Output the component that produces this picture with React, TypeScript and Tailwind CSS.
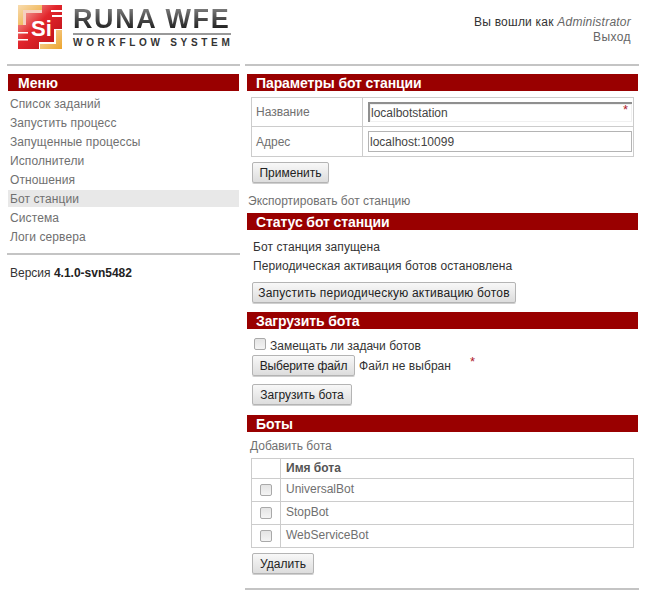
const menu = [
  "Список заданий",
  "Запустить процесс",
  "Запущенные процессы",
  "Исполнители",
  "Отношения",
  "Бот станции",
  "Система",
  "Логи сервера",
]

const bots = ["UniversalBot", "StopBot", "WebServiceBot"]

function SectionTitle({ title, className = "" }: { title: string; className?: string }) {
  return (
    <div className={`h-[17px] bg-[#990000] text-[14px] leading-[18px] font-bold text-white ${className}`}>
      {title}
    </div>
  )
}

function Btn({ label, className = "" }: { label: string; className?: string }) {
  return (
    <button className={`block h-[21px] rounded-[2px] border border-[#b4b4b4] bg-gradient-to-b from-[#f8f8f8] to-[#dddddd] text-[12px] leading-[18px] text-[#222222] shadow-[0_1px_0_#cfcfcf] ${className}`}>
      {label}
    </button>
  )
}

function Check() {
  return (
    <span className="block h-[12px] w-[12px] rounded-[2px] border border-[#a9a9a9] bg-gradient-to-b from-[#e4e4e4] to-[#f4f4f4]" />
  )
}

function Star({ className = "" }: { className?: string }) {
  return <span className={`absolute text-[13px] leading-none text-[#b0202a] ${className}`}>*</span>
}

function Logo() {
  return (
    <svg width="44" height="45" viewBox="0 0 44 45" className="shrink-0">
      <defs>
        <linearGradient id="red" x1="0" y1="0" x2="1" y2="1">
          <stop offset="0" stopColor="#f9c4b8" />
          <stop offset="0.45" stopColor="#e2262c" />
          <stop offset="1" stopColor="#b50c14" />
        </linearGradient>
        <linearGradient id="orange" x1="0" y1="0" x2="1" y2="1">
          <stop offset="0" stopColor="#f8dcb0" />
          <stop offset="1" stopColor="#eca42c" />
        </linearGradient>
      </defs>
      <rect width="44" height="44" fill="url(#red)" />
      <path d="M0 0h24v5H5v15H0z" fill="url(#orange)" />
      <path d="M5 5h19v3H8v12H5z" fill="#f6cfc0" />
      <rect x="33" y="5" width="11" height="2" fill="#fff" />
      <rect x="34" y="10" width="10" height="2" fill="#fff" />
      <rect x="0" y="27" width="10" height="1.5" fill="#fff" />
      <rect x="0" y="34" width="10" height="1.5" fill="#fff" />
      <path d="M36 24h8v20H21v-7h15z" fill="#fff" />
      <path d="M38 25h6v19H22v-5h16z" fill="url(#orange)" />
      <text x="13" y="31" fontFamily="'Liberation Sans', sans-serif" fontWeight="700" fontSize="22" fill="#fff">Si</text>
    </svg>
  )
}

export default function App() {
  return (
    <div className="h-[600px] w-[646px] overflow-hidden bg-white font-['Liberation_Sans',Arial,sans-serif] text-[12px] text-[#555555]">
      {/* Header */}
      <div className="flex h-[64px] items-start justify-between pt-[5px] pr-[15px] pl-[18px]">
        <div className="flex items-start gap-[11px]">
          <Logo />
          <div className="pt-[1px]">
            <div className="bg-gradient-to-b from-[#888888] to-[#111111] bg-clip-text text-[27px] leading-[27px] font-bold tracking-[1.6px] whitespace-nowrap text-transparent">
              RUNA WFE
            </div>
            <div className="w-[158px] border-t-2 border-[#999999] pt-[3px] text-[10px] leading-[9px] font-bold tracking-[3.7px] whitespace-nowrap text-[#333333]">
              WORKFLOW SYSTEM
            </div>
          </div>
        </div>
        <div className="pt-[10px] text-right text-[12px] leading-[15px] text-[#333333]">
          <div className="tracking-[0.23px]">
            Вы вошли как <i className="text-[#666666]">Administrator</i>
          </div>
          <div className="tracking-[0.4px] text-[#666666]">Выход</div>
        </div>
      </div>

      <div className="flex">
        {/* Left column */}
        <div className="ml-[7px] w-[233px]">
          <div className="h-[2px] bg-[#c4c4c4]" />
          <SectionTitle title="Меню" className="mx-[1px] mt-[8px] pl-[10px]" />
          <ul className="mx-[1px] mt-[3px]">
            {menu.map((item) => (
              <li key={item} className="h-[19px] py-px">
                <div className={`h-[17px] pl-[2px] leading-[19px] tracking-[0.1px] text-[#707070] ${item === "Бот станции" ? "bg-[#e8e8e8]" : ""}`}>
                  {item}
                </div>
              </li>
            ))}
          </ul>
          <div className="mt-[7px] h-[2px] bg-[#c4c4c4]" />
          <div className="mt-[9px] ml-[3px] text-[#333333]">
            Версия <b className="text-[#222222]">4.1.0-svn5482</b>
          </div>
        </div>

        {/* Right column */}
        <div className="ml-[5px] w-[394px]">
          <div className="h-[2px] bg-[#c4c4c4]" />
          <div className="ml-[2px] w-[391px]">
            <SectionTitle title="Параметры бот станции" className="mt-[8px] pl-[9px] tracking-[-0.1px]" />

            <div className="mt-[6px] ml-[4px] w-[383px] border border-[#cccccc]">
              <div className="flex h-[29px] border-b border-[#cccccc]">
                <div className="w-[111px] border-r border-[#cccccc] pl-[4px] leading-[29px] text-[#707070]">Название</div>
                <div className="relative pt-[4px] pl-[5px]">
                  <div className="h-[20px] w-[264px] border-t-2 border-l-2 border-t-[#8f8f8f] border-l-[#8f8f8f] bg-white pl-[1px] leading-[18px] text-[#444444] shadow-[inset_0_0_0_1px_#f0f0f0]">
                    localbotstation
                  </div>
                  <Star className="top-[5px] right-[4px]" />
                </div>
              </div>
              <div className="flex h-[29px]">
                <div className="w-[111px] border-r border-[#cccccc] pl-[4px] leading-[31px] text-[#707070]">Адрес</div>
                <div className="pt-[4px] pl-[5px]">
                  <div className="h-[21px] w-[264px] border border-[#b4b4b4] bg-white pl-[1px] leading-[20px] text-[#444444]">
                    localhost:10099
                  </div>
                </div>
              </div>
            </div>

            <Btn label="Применить" className="mt-[5px] ml-[5px] w-[77px]" />
            <div className="mt-[11px] ml-[1px] h-[15px] leading-[15px] text-[#707070]">Экспортировать бот станцию</div>

            <SectionTitle title="Статус бот станции" className="mt-[4px] pl-[9px] tracking-[-0.1px]" />
            <div className="mt-[8px] ml-[6px] leading-[19px] tracking-[0.07px] text-[#333333]">
              <div>Бот станция запущена</div>
              <div>Периодическая активация ботов остановлена</div>
            </div>
            <Btn label="Запустить периодическую активацию ботов" className="mt-[6px] ml-[5px] w-[264px] tracking-[0.2px]" />

            <SectionTitle title="Загрузить бота" className="mt-[9px] pl-[9px] tracking-[-0.1px]" />
            <div className="mt-[9px] ml-[7px] flex h-[14px] items-start gap-[4px] text-[#333333]">
              <Check />
              <span className="leading-[16px]">Замещать ли задачи ботов</span>
            </div>
            <div className="relative mt-[3px] ml-[5px] flex items-center">
              <Btn label="Выберите файл" className="w-[103px] tracking-[-0.1px]" />
              <span className="ml-[4px] tracking-[0.05px] text-[#333333]">Файл не выбран</span>
              <Star className="top-0 left-[218px]" />
            </div>
            <Btn label="Загрузить бота" className="mt-[8px] ml-[5px] w-[100px]" />

            <SectionTitle title="Боты" className="mt-[10px] pl-[9px]" />
            <div className="mt-[7px] ml-[3px] h-[15px] leading-[15px] text-[#707070]">Добавить бота</div>

            <div className="mt-[4px] ml-[4px] w-[383px] border border-[#cccccc]">
              <div className="flex h-[19px]">
                <div className="w-[29px] border-r border-[#cccccc]" />
                <div className="pl-[5px] leading-[19px] font-bold text-[#555555]">Имя бота</div>
              </div>
              {bots.map((name) => (
                <div key={name} className="flex h-[23px] border-t border-[#cccccc]">
                  <div className="flex w-[29px] items-center justify-center border-r border-[#cccccc] pb-px">
                    <Check />
                  </div>
                  <div className="pl-[5px] leading-[21px] text-[#707070]">{name}</div>
                </div>
              ))}
            </div>

            <Btn label="Удалить" className="mt-[5px] ml-[5px] w-[62px]" />
          </div>
          <div className="mt-[14px] h-[2px] bg-[#c4c4c4]" />
        </div>
      </div>
    </div>
  )
}
